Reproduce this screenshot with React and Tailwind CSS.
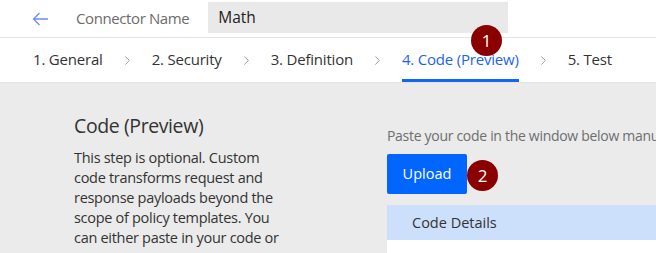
import { ChevronRight } from 'lucide-react';

const tabs = ['1. General', '2. Security', '3. Definition', '4. Code (Preview)', '5. Test'];

function Badge({ n, className }) {
  return (
    <div
      className={`absolute w-[31px] h-[31px] rounded-full bg-[#8a0000] text-white text-[17px] flex items-center justify-center ${className}`}
    >
      {n}
    </div>
  );
}

export default function App() {
  return (
    <div className="relative w-[656px] h-[253px] overflow-hidden bg-[#ebebeb] font-['Open_Sans',sans-serif]">
      {/* Header */}
      <div className="h-[38px] bg-white flex items-center border-b border-[#e3e3e3]">
        <svg className="ml-[32px]" width="17" height="14" viewBox="0 0 17 14" fill="none">
          <path d="M16 7H1.5M7.5 1L1.5 7l6 6" stroke="#6b8dff" strokeWidth="1.3" />
        </svg>
        <span className="ml-[27px] text-[15px] text-[#6b6b6b] tracking-[-0.4px]">Connector Name</span>
        <div className="ml-[19px] mt-[-2px] w-[300px] h-[31px] bg-[#e9e9e9] flex items-center pl-[10px] text-[15.5px] text-[#222]">
          Math
        </div>
      </div>

      {/* Steps */}
      <div className="h-[45px] bg-white flex items-stretch pl-[33px] border-b border-[#e3e3e3]">
        {tabs.map((t, i) => (
          <div key={t} className="flex items-center">
            <div
              className={`h-full flex items-center pt-[2px] text-[15px] tracking-[-0.2px] border-b-[3px] ${
                i === 3 ? 'text-[#1f63ec] border-[#0f67f5]' : 'text-[#333] border-transparent'
              }`}
            >
              {t}
            </div>
            {i < tabs.length - 1 && (
              <ChevronRight size={15} strokeWidth={1.2} className="mx-[17px] text-[#777]" />
            )}
          </div>
        ))}
      </div>

      {/* Body */}
      <div className="flex pt-[29px]">
        <div className="w-[387px] shrink-0 pl-[74px]">
          <h2 className="text-[19.5px] text-[#333] leading-[28px] tracking-[-0.4px]">Code (Preview)</h2>
          <p className="mt-[8px] w-[220px] text-[14.5px] leading-[20px] text-[#333] tracking-[-0.3px]">
            This step is optional. Custom code transforms request and response payloads beyond the scope of policy
            templates. You can either paste in your code or
          </p>
        </div>
        <div className="flex-1 min-w-0 pt-[14px]">
          <p className="text-[14px] text-[#6e6e6e] whitespace-nowrap leading-[20px] tracking-[-0.3px]">
            Paste your code in the window below manually or upload a file
          </p>
          <button className="mt-[8px] w-[80px] h-[40px] rounded-[2px] bg-[#0066ff] text-white text-[14.5px]">
            Upload
          </button>
          <div className="mt-[11px] h-[35px] bg-[#cce0fc] flex items-center pl-[25px] text-[14.5px] text-[#333]">
            Code Details
          </div>
          <div className="h-[20px] bg-white" />
        </div>
      </div>

      <Badge n="1" className="left-[471px] top-[25px]" />
      <Badge n="2" className="left-[467px] top-[160px]" />
    </div>
  );
}
